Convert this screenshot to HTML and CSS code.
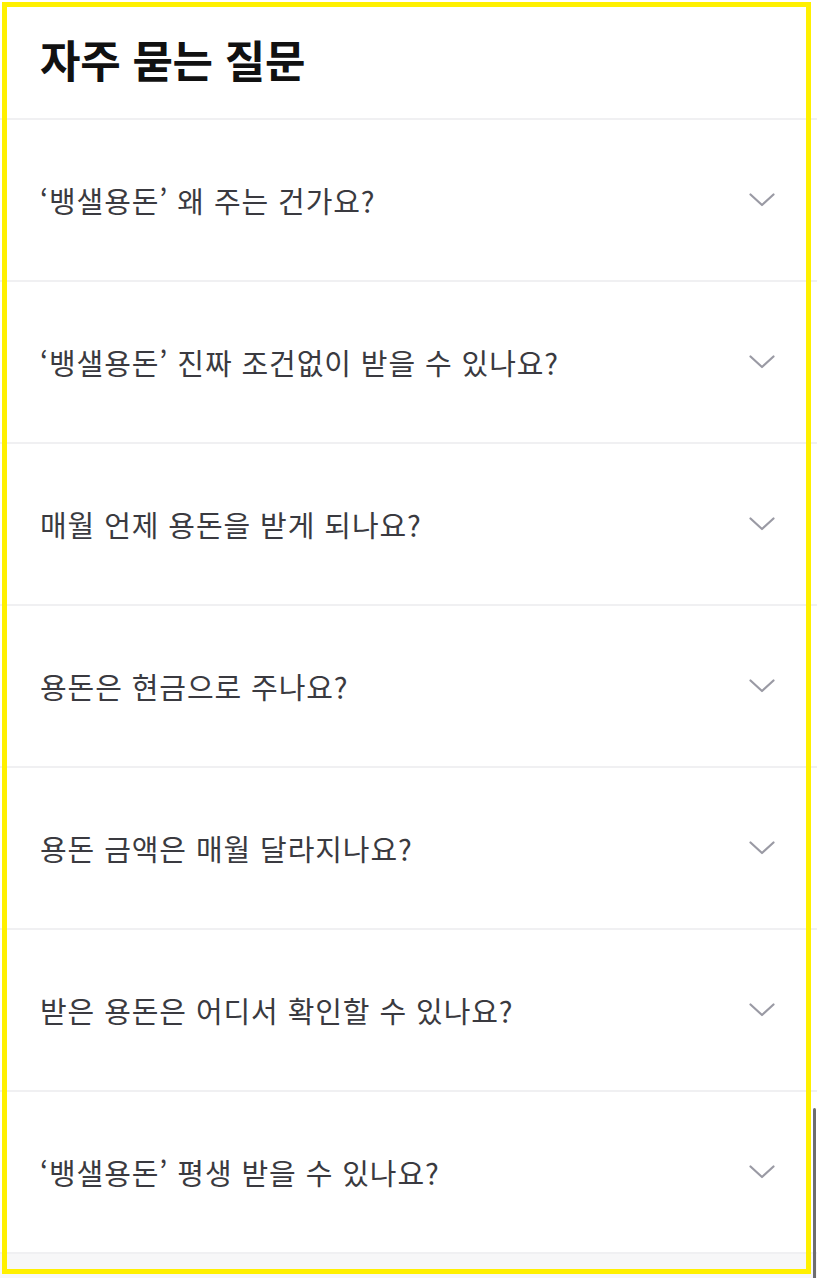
FILE: index.html
```html
<!DOCTYPE html>
<html lang="ko">
<head>
<meta charset="utf-8">
<link rel="stylesheet" href="styles.css">
</head>
<body>
<div class="page">
  <header class="faq-head">
    <h1 class="faq-title">자주 묻는 질문</h1>
  </header>
  <ul class="faq-list">
    <li class="faq-item"><span class="q">‘뱅샐용돈’ 왜 주는 건가요?</span><svg class="chev" viewBox="0 0 26 14"><path d="M1.5 1.5 L13 12 L24.5 1.5"/></svg></li>
    <li class="faq-item"><span class="q">‘뱅샐용돈’ 진짜 조건없이 받을 수 있나요?</span><svg class="chev" viewBox="0 0 26 14"><path d="M1.5 1.5 L13 12 L24.5 1.5"/></svg></li>
    <li class="faq-item"><span class="q">매월 언제 용돈을 받게 되나요?</span><svg class="chev" viewBox="0 0 26 14"><path d="M1.5 1.5 L13 12 L24.5 1.5"/></svg></li>
    <li class="faq-item"><span class="q">용돈은 현금으로 주나요?</span><svg class="chev" viewBox="0 0 26 14"><path d="M1.5 1.5 L13 12 L24.5 1.5"/></svg></li>
    <li class="faq-item"><span class="q">용돈 금액은 매월 달라지나요?</span><svg class="chev" viewBox="0 0 26 14"><path d="M1.5 1.5 L13 12 L24.5 1.5"/></svg></li>
    <li class="faq-item"><span class="q">받은 용돈은 어디서 확인할 수 있나요?</span><svg class="chev" viewBox="0 0 26 14"><path d="M1.5 1.5 L13 12 L24.5 1.5"/></svg></li>
    <li class="faq-item"><span class="q">‘뱅샐용돈’ 평생 받을 수 있나요?</span><svg class="chev" viewBox="0 0 26 14"><path d="M1.5 1.5 L13 12 L24.5 1.5"/></svg></li>
  </ul>
  <div class="faq-foot"></div>
  <div class="highlight"></div>
  <div class="scrollbar"></div>
</div>
</body>
</html>
```
FILE: styles.css
```css
html, body {
  margin: 0;
  padding: 0;
  background: #ffffff;
}
body {
  font-family: "Noto Sans CJK KR", "Noto Sans", sans-serif;
}
.page {
  position: relative;
  width: 817px;
  height: 1278px;
  overflow: hidden;
  background: #ffffff;
}
.faq-head {
  height: 118px;
  border-bottom: 2px solid #f0f0f2;
  display: flex;
  align-items: center;
  padding-left: 40px;
}
.faq-title {
  margin: 0;
  font-size: 44px;
  font-weight: 700;
  color: #111111;
  letter-spacing: -0.3px;
  line-height: 1;
}
.faq-list {
  list-style: none;
  margin: 0;
  padding: 0;
}
.faq-item {
  height: 160px;
  border-bottom: 2px solid #f0f0f2;
  display: flex;
  align-items: center;
  justify-content: space-between;
  padding: 0 42px 0 40px;
}
.q {
  font-size: 29px;
  color: #3a3a40;
  letter-spacing: 0.9px;
  line-height: 1;
}
.chev {
  width: 26px;
  height: 14px;
  fill: none;
  stroke: #9a9aa4;
  stroke-width: 2.2;
  stroke-linecap: round;
  stroke-linejoin: round;
}
.faq-foot {
  height: 40px;
  background: #f7f7f8;
}
.highlight {
  position: absolute;
  left: 2px;
  top: 2px;
  width: 809px;
  height: 1272px;
  box-sizing: border-box;
  border: 5px solid #fff000;
  pointer-events: none;
}
.scrollbar {
  position: absolute;
  right: 1px;
  top: 1108px;
  width: 3px;
  height: 180px;
  border-radius: 2px;
  background: #6e6e6e;
}
```
